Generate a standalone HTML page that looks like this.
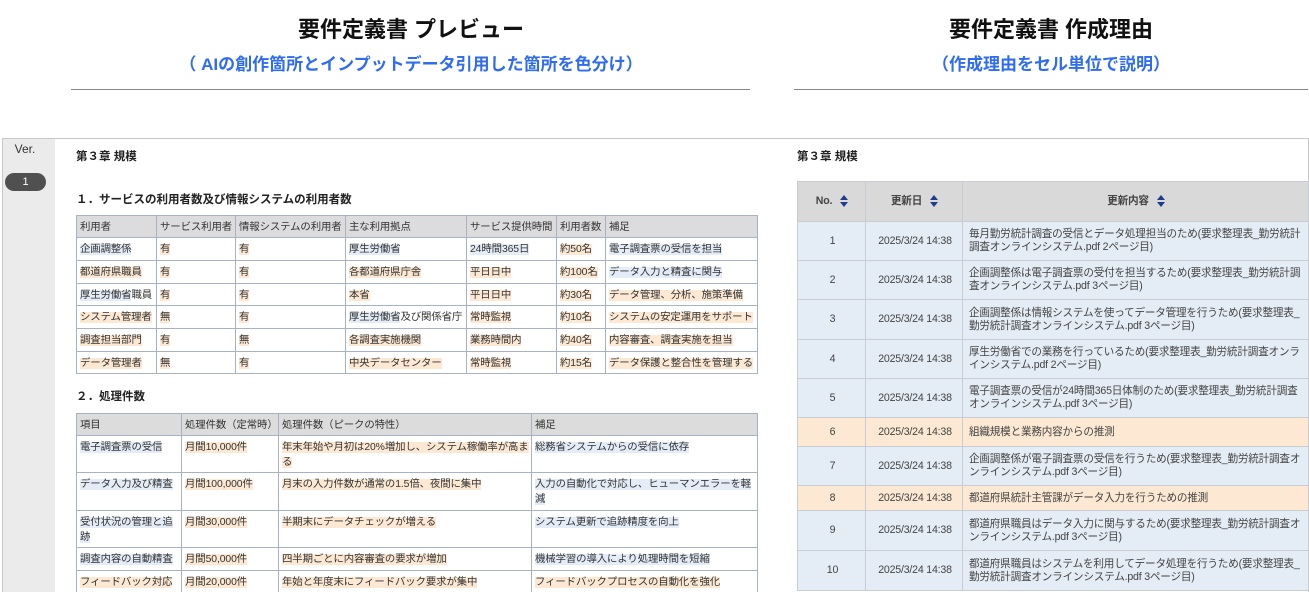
<!DOCTYPE html>
<html><head><meta charset="utf-8"><style>
*{margin:0;padding:0;box-sizing:border-box}
html,body{width:1309px;height:592px;overflow:hidden}
body{background:#fff;font-family:"Liberation Sans","Noto Sans CJK JP",sans-serif;color:#333;position:relative}
.a{position:absolute}
.t1{font-size:22px;font-weight:bold;color:#111;text-align:center}
.t2{font-size:17px;font-weight:bold;color:#2f6cf0;text-align:center}
table{border-collapse:collapse;table-layout:fixed;position:absolute;font-size:10.4px}
td,th{border:1px solid #a7b2c3;text-align:left;vertical-align:top;padding:4px 2px 0 3px;font-weight:normal;line-height:15px;overflow:hidden;white-space:nowrap;letter-spacing:-0.1px}
th{background:#dcdcdc}
.o{background:#fde9d3}
.b{background:#e4edf7}
.w td{white-space:normal}
h3{position:absolute;font-size:11.5px;font-weight:bold;color:#222}
.r td,.r th{border:1px solid #c9cdd3;vertical-align:middle;padding:0 4px 0 6px;font-size:10.6px;color:#444;line-height:13px;white-space:normal;letter-spacing:-0.2px}
.r th{text-align:center;background:#d9d9d9;font-weight:bold;color:#444}
.r td.c{text-align:center}
.rb td{background:#e4ecf5}
.ro td{background:#fce8d3}
.s{display:inline-block;width:9px;height:12px;vertical-align:middle;margin-left:8px;position:relative}
.s:before{content:"";position:absolute;left:0;top:0;border-left:4.5px solid transparent;border-right:4.5px solid transparent;border-bottom:5px solid #1f3c8c}
.s:after{content:"";position:absolute;left:0;top:7px;border-left:4.5px solid transparent;border-right:4.5px solid transparent;border-top:5px solid #1f3c8c}
</style></head><body>
<div class="a t1" style="left:71px;width:680px;top:12px">要件定義書 プレビュー</div>
<div class="a t2" style="left:71px;width:680px;top:50px">（ AIの創作箇所とインプットデータ引用した箇所を色分け）</div>
<div class="a" style="left:71px;width:679px;top:89px;height:1px;background:#888"></div>
<div class="a t1" style="left:794px;width:514px;top:12px">要件定義書 作成理由</div>
<div class="a t2" style="left:794px;width:514px;top:50px">（作成理由をセル単位で説明）</div>
<div class="a" style="left:794px;width:514px;top:89px;height:1px;background:#888"></div>

<div class="a" style="left:2px;top:138px;width:1307px;height:460px;border:1px solid #c8c8c8"></div>
<div class="a" style="left:3px;top:139px;width:52px;height:460px;background:#ebebeb"></div>
<div class="a" style="left:3px;top:142px;width:44px;text-align:center;font-size:12px;color:#333">Ver.</div>
<div class="a" style="left:5px;top:173px;width:41px;height:18px;border-radius:9px;background:#505050;color:#fff;font-size:11px;text-align:center;line-height:18px">1</div>

<h3 style="left:76px;top:148px">第３章 規模</h3>
<h3 style="left:76px;top:191px">１．サービスの利用者数及び情報システムの利用者数</h3>
<table style="left:76px;top:215px;width:681px">
<colgroup><col style="width:80px"><col style="width:79px"><col style="width:110px"><col style="width:121px"><col style="width:90px"><col style="width:49px"><col style="width:152px"></colgroup>
<tr style="height:22px"><th>利用者</th><th>サービス利用者</th><th>情報システムの利用者</th><th>主な利用拠点</th><th>サービス提供時間</th><th>利用者数</th><th>補足</th></tr>
<tr style="height:23px"><td><span class="b">企画調整係</span></td><td><span class="o">有</span></td><td><span class="o">有</span></td><td><span class="b">厚生労働省</span></td><td><span class="b">24時間365日</span></td><td><span class="o">約50名</span></td><td><span class="b">電子調査票の受信を担当</span></td></tr>
<tr style="height:23px"><td><span class="o">都道府県職員</span></td><td><span class="o">有</span></td><td><span class="o">有</span></td><td><span class="o">各都道府県庁舎</span></td><td><span class="o">平日日中</span></td><td><span class="o">約100名</span></td><td><span class="b">データ入力と精査に関与</span></td></tr>
<tr style="height:22px"><td><span class="b">厚生労働省</span>職員</td><td><span class="o">有</span></td><td><span class="o">有</span></td><td><span class="o">本省</span></td><td><span class="o">平日日中</span></td><td><span class="o">約30名</span></td><td><span class="o">データ管理、分析、施策準備</span></td></tr>
<tr style="height:23px"><td><span class="o">システム管理者</span></td><td><span class="o">無</span></td><td><span class="o">有</span></td><td><span class="b">厚生労働省</span>及び関係省庁</td><td><span class="o">常時監視</span></td><td><span class="o">約10名</span></td><td><span class="o">システムの安定運用をサポート</span></td></tr>
<tr style="height:23px"><td><span class="o">調査担当部門</span></td><td><span class="o">有</span></td><td><span class="o">無</span></td><td><span class="o">各調査実施機関</span></td><td><span class="o">業務時間内</span></td><td><span class="o">約40名</span></td><td><span class="o">内容審査、調査実施を担当</span></td></tr>
<tr style="height:22px"><td><span class="o">データ管理者</span></td><td><span class="o">無</span></td><td><span class="o">有</span></td><td><span class="o">中央データセンター</span></td><td><span class="o">常時監視</span></td><td><span class="o">約15名</span></td><td><span class="o">データ保護と整合性を管理する</span></td></tr>
</table>

<h3 style="left:76px;top:388px">２．処理件数</h3>
<table class="w" style="left:76px;top:413px;width:681px">
<colgroup><col style="width:105px"><col style="width:97px"><col style="width:253px"><col style="width:226px"></colgroup>
<tr style="height:22px"><th>項目</th><th>処理件数（定常時）</th><th>処理件数（ピークの特性）</th><th>補足</th></tr>
<tr style="height:37px"><td><span class="b">電子調査票の受信</span></td><td><span class="o">月間10,000件</span></td><td><span class="o">年末年始や月初は20%増加し、システム稼働率が高まる</span></td><td><span class="b">総務省システムからの受信に依存</span></td></tr>
<tr style="height:38px"><td><span class="b">データ入力及び精査</span></td><td><span class="o">月間100,000件</span></td><td><span class="o">月末の入力件数が通常の1.5倍、夜間に集中</span></td><td><span class="b">入力の自動化で対応し、ヒューマンエラーを軽減</span></td></tr>
<tr style="height:37px"><td><span class="b">受付状況の管理と追跡</span></td><td><span class="o">月間30,000件</span></td><td><span class="o">半期末にデータチェックが増える</span></td><td><span class="b">システム更新で追跡精度を向上</span></td></tr>
<tr style="height:23px"><td><span class="b">調査内容の自動精査</span></td><td><span class="o">月間50,000件</span></td><td><span class="o">四半期ごとに内容審査の要求が増加</span></td><td><span class="b">機械学習の導入により処理時間を短縮</span></td></tr>
<tr style="height:23px"><td><span class="o">フィードバック対応</span></td><td><span class="o">月間20,000件</span></td><td><span class="o">年始と年度末にフィードバック要求が集中</span></td><td><span class="o">フィードバックプロセスの自動化を強化</span></td></tr>
</table>

<h3 style="left:797px;top:148px">第３章 規模</h3>
<table class="r" style="left:797px;top:181px;width:511px">
<colgroup><col style="width:68px"><col style="width:97px"><col style="width:346px"></colgroup>
<tr style="height:40px"><th>No.<span class="s"></span></th><th>更新日<span class="s"></span></th><th>更新内容<span class="s"></span></th></tr>
<tr class="rb" style="height:39px"><td class="c">1</td><td class="c">2025/3/24 14:38</td><td>毎月勤労統計調査の受信とデータ処理担当のため(要求整理表_勤労統計調査オンラインシステム.pdf 2ページ目)</td></tr>
<tr class="rb" style="height:39px"><td class="c">2</td><td class="c">2025/3/24 14:38</td><td>企画調整係は電子調査票の受付を担当するため(要求整理表_勤労統計調査オンラインシステム.pdf 3ページ目)</td></tr>
<tr class="rb" style="height:40px"><td class="c">3</td><td class="c">2025/3/24 14:38</td><td>企画調整係は情報システムを使ってデータ管理を行うため(要求整理表_勤労統計調査オンラインシステム.pdf 3ページ目)</td></tr>
<tr class="rb" style="height:39px"><td class="c">4</td><td class="c">2025/3/24 14:38</td><td>厚生労働省での業務を行っているため(要求整理表_勤労統計調査オンラインシステム.pdf 2ページ目)</td></tr>
<tr class="rb" style="height:39px"><td class="c">5</td><td class="c">2025/3/24 14:38</td><td>電子調査票の受信が24時間365日体制のため(要求整理表_勤労統計調査オンラインシステム.pdf 3ページ目)</td></tr>
<tr class="ro" style="height:29px"><td class="c">6</td><td class="c">2025/3/24 14:38</td><td>組織規模と業務内容からの推測</td></tr>
<tr class="rb" style="height:39px"><td class="c">7</td><td class="c">2025/3/24 14:38</td><td>企画調整係が電子調査票の受信を行うため(要求整理表_勤労統計調査オンラインシステム.pdf 3ページ目)</td></tr>
<tr class="ro" style="height:25px"><td class="c">8</td><td class="c">2025/3/24 14:38</td><td>都道府県統計主管課がデータ入力を行うための推測</td></tr>
<tr class="rb" style="height:40px"><td class="c">9</td><td class="c">2025/3/24 14:38</td><td>都道府県職員はデータ入力に関与するため(要求整理表_勤労統計調査オンラインシステム.pdf 3ページ目)</td></tr>
<tr class="rb" style="height:40px"><td class="c">10</td><td class="c">2025/3/24 14:38</td><td>都道府県職員はシステムを利用してデータ処理を行うため(要求整理表_勤労統計調査オンラインシステム.pdf 3ページ目)</td></tr>
</table>
</body></html>
